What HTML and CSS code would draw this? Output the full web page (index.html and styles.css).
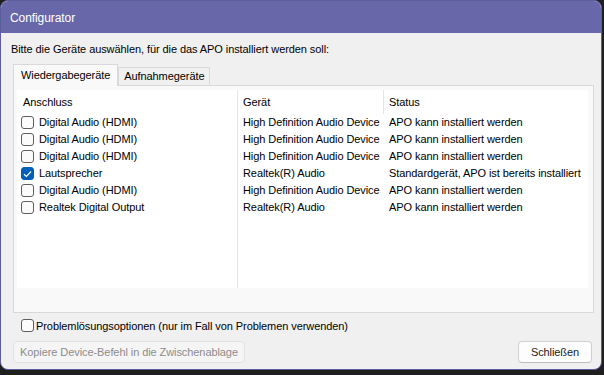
FILE: index.html
```html
<!DOCTYPE html>
<html lang="de">
<head>
    <meta charset="UTF-8">
    <title>Configurator</title>
    <link rel="stylesheet" href="styles.css">
</head>
<body>
    <div class="window">
        <!-- Title bar -->
        <div class="titlebar">Configurator</div>

        <div class="content">
            <p class="intro">Bitte die Geräte auswählen, für die das APO installiert werden soll:</p>

            <!-- Tabs -->
            <div class="tabs">
                <div class="tab active">Wiedergabegeräte</div>
                <div class="tab">Aufnahmegeräte</div>
            </div>

            <div class="tab-panel">
                <div class="list">
                    <div class="row head">
                        <div class="cell">Anschluss</div>
                        <div class="cell sep">Gerät</div>
                        <div class="cell">Status</div>
                    </div>
                    <div class="row">
                        <div class="cell"><span class="check"></span>Digital Audio (HDMI)</div>
                        <div class="cell">High Definition Audio Device</div>
                        <div class="cell">APO kann installiert werden</div>
                    </div>
                    <div class="row">
                        <div class="cell"><span class="check"></span>Digital Audio (HDMI)</div>
                        <div class="cell">High Definition Audio Device</div>
                        <div class="cell">APO kann installiert werden</div>
                    </div>
                    <div class="row">
                        <div class="cell"><span class="check"></span>Digital Audio (HDMI)</div>
                        <div class="cell">High Definition Audio Device</div>
                        <div class="cell">APO kann installiert werden</div>
                    </div>
                    <div class="row">
                        <div class="cell"><span class="check checked"><svg width="9" height="8" viewBox="0 0 9 8"><path d="M1 4.2 L3.4 6.5 L8 1.5" fill="none" stroke="#fff" stroke-width="1.2"/></svg></span>Lautsprecher</div>
                        <div class="cell">Realtek(R) Audio</div>
                        <div class="cell">Standardgerät, APO ist bereits installiert</div>
                    </div>
                    <div class="row">
                        <div class="cell"><span class="check"></span>Digital Audio (HDMI)</div>
                        <div class="cell">High Definition Audio Device</div>
                        <div class="cell">APO kann installiert werden</div>
                    </div>
                    <div class="row">
                        <div class="cell"><span class="check"></span>Realtek Digital Output</div>
                        <div class="cell">Realtek(R) Audio</div>
                        <div class="cell">APO kann installiert werden</div>
                    </div>
                </div>
            </div>

            <!-- Options -->
            <div class="option"><span class="check"></span>Problemlösungsoptionen (nur im Fall von Problemen verwenden)</div>

            <div class="buttons">
                <button class="btn" disabled>Kopiere Device-Befehl in die Zwischenablage</button>
                <button class="btn btn-close">Schließen</button>
            </div>
        </div>
    </div>
</body>
</html>
```

FILE: styles.css
```css
/* Page style */
body {
    margin: 0;
    padding: 0;
    background: #1f1f1f;
    font-family: "Liberation Sans", Arial, sans-serif;
    font-size: 11px;
    letter-spacing: -0.08px;
    color: #000;
}

/* Window frame */
.window {
    width: 600px;
    height: 368px;
    border: 1px solid #5d5d9c;
    border-radius: 8px;
    overflow: hidden;
    background: #f0f0f0;
    display: flex;
    flex-direction: column;
}

.titlebar {
    height: 32px;
    line-height: 34px;
    padding-left: 9px;
    background: #6767a9;
    color: #fff;
    font-size: 12px;
}

.content {
    padding: 9px 7px 0 12px;
}

.intro {
    margin: 0 0 0 -2px;
    line-height: 14px;
}

/* Tabs */
.tabs {
    display: flex;
    align-items: flex-end;
    height: 20px;
    margin-top: 9px;
}

.tab {
    height: 17px;
    line-height: 17px;
    padding: 0 5px 0 5px;
    border: 1px solid #d9d9d9;
    border-bottom: none;
    background: #f0f0f0;
}

.tab.active {
    height: 21px;
    line-height: 21px;
    padding: 0 7px 0 7px;
    background: #f9f9f9;
    position: relative;
    z-index: 1;
    margin-bottom: -1px;
}

.tab-panel {
    height: 222px;
    border: 1px solid #d9d9d9;
    background: #f9f9f9;
    padding: 4px 5px 0 3px;
}

/* List view */
.list {
    height: 198px;
    background: linear-gradient(to right, transparent 220px, #e5e5e5 220px, #e5e5e5 221px, transparent 221px), #fff;
}

.row {
    display: grid;
    grid-template-columns: 221px 146px 1fr;
    height: 17px;
    line-height: 17px;
}

.row.head {
    height: 24px;
    line-height: 24px;
}

.cell {
    display: flex;
    align-items: center;
    padding-left: 5px;
    white-space: nowrap;
}

.row .cell:first-child {
    padding-left: 4px;
}

.row.head .cell:first-child {
    padding-left: 6px;
}

.cell.sep {
    border-right: 1px solid #e5e5e5;
}

/* Check boxes */
.check {
    box-sizing: border-box;
    width: 13px;
    height: 13px;
    border: 1px solid #5f5f5f;
    border-radius: 3px;
    background: #fbfbfb;
    margin-right: 5px;
    display: inline-flex;
    align-items: center;
    justify-content: center;
    flex-shrink: 0;
}

.check.checked {
    background: #005fb8;
    border-color: #005fb8;
}

.option {
    display: flex;
    align-items: center;
    height: 13px;
    margin: 6px 0 0 8px;
}

.option .check {
    margin-right: 2px;
}

/* Buttons */
.buttons {
    display: flex;
    justify-content: space-between;
    margin-top: 9px;
    padding-right: 2px;
}

.btn {
    height: 22px;
    padding: 0 4px;
    font-family: inherit;
    font-size: 11px;
    letter-spacing: -0.08px;
    white-space: nowrap;
    border: 1px solid #d0d0d0;
    border-bottom-color: #bdbdbd;
    border-radius: 4px;
    background: #fdfdfd;
    color: #1a1a1a;
}

.btn:disabled {
    width: 232px;
    background: #f5f5f5;
    border-color: #e2e2e2;
    color: #8c8c8c;
}

.btn-close {
    width: 74px;
}
```
